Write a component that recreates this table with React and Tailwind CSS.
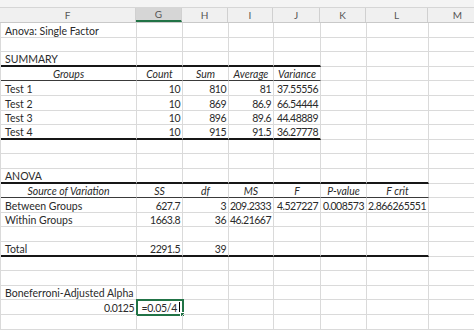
const COLS = [
  { key: 'F', w: 'w-[136px]' },
  { key: 'G', w: 'w-[46px]' },
  { key: 'H', w: 'w-[46px]' },
  { key: 'I', w: 'w-[45px]' },
  { key: 'J', w: 'w-[47px]' },
  { key: 'K', w: 'w-[46px]' },
  { key: 'L', w: 'w-[62px]' },
  { key: 'M', w: 'w-[60px]' },
];

// rows alternate 15/14px so the lines land where Excel's 14.6px rows do
const ROWS = [
  { h: 'h-[15px]', cells: ['Anova: Single Factor'] },
  { h: 'h-[14px]', cells: [] },
  { h: 'h-[15px]', cells: ['SUMMARY'], line: 'thick', span: 5 },
  { h: 'h-[14px]', cells: ['Groups', 'Count', 'Sum', 'Average', 'Variance'], head: true, line: 'thin', span: 5 },
  { h: 'h-[15px]', cells: ['Test 1', '10', '810', '81', '37.55556'] },
  { h: 'h-[15px]', cells: ['Test 2', '10', '869', '86.9', '66.54444'] },
  { h: 'h-[14px]', cells: ['Test 3', '10', '896', '89.6', '44.48889'] },
  { h: 'h-[15px]', cells: ['Test 4', '10', '915', '91.5', '36.27778'], line: 'thick', span: 5 },
  { h: 'h-[14px]', cells: [] },
  { h: 'h-[15px]', cells: [] },
  { h: 'h-[15px]', cells: ['ANOVA'], line: 'thick', span: 7 },
  { h: 'h-[14px]', cells: ['Source of Variation', 'SS', 'df', 'MS', 'F', 'P-value', 'F crit'], head: true, line: 'thin', span: 7 },
  { h: 'h-[15px]', cells: ['Between Groups', '627.7', '3', '209.2333', '4.527227', '0.008573', '2.866265551'] },
  { h: 'h-[14px]', cells: ['Within Groups', '1663.8', '36', '46.21667'] },
  { h: 'h-[15px]', cells: [] },
  { h: 'h-[15px]', cells: ['Total', '2291.5', '39'], line: 'thick', span: 7 },
  { h: 'h-[14px]', cells: [] },
  { h: 'h-[15px]', cells: [] },
  { h: 'h-[14px]', cells: ['Boneferroni-Adjusted Alpha'] },
  { h: 'h-[15px]', cells: ['0.0125'], alpha: true },
  { h: 'h-[15px]', cells: [] },
];

function Cell({ col, i, row }) {
  const text = row.cells[i];
  const inTable = row.span && i < row.span;
  let bottom = 'border-b border-b-[#dadada]';
  if (inTable && row.line === 'thick') bottom = 'border-b-2 border-b-[#161616]';
  if (inTable && row.line === 'thin') bottom = 'border-b border-b-[#3a3a3a]';

  const numeric = !row.head && (i > 0 || row.alpha);
  let align = numeric ? 'justify-end pr-[2px] tracking-[-0.5px]' : 'justify-start pl-[4px]';
  if (row.head) align = 'justify-center';

  const selected = row.alpha && i === 1;

  return (
    <div
      className={`${col.w} relative flex h-full shrink-0 items-end whitespace-nowrap border-r border-r-[#dadada] pb-[1px] ${bottom} ${align}`}
    >
      {text && <span className={row.head ? 'italic' : ''}>{text}</span>}
      {selected && (
        <>
          <span className="flex items-end pl-[2px] tracking-[-0.3px]">
            =0.05/4<span className="mb-[1px] ml-[2px] inline-block h-[10px] w-px bg-black" />
          </span>
          <div className="absolute -left-[1px] -top-[1px] h-[17px] w-[48px] border-2 border-[#217346]" />
          <div className="absolute -bottom-[3px] -right-[3px] h-[5px] w-[5px] border border-white bg-[#217346]" />
        </>
      )}
    </div>
  );
}

export default function App() {
  return (
    <div className="h-[331px] w-[474px] overflow-hidden bg-white font-['Lato',sans-serif] text-[10.5px] leading-none text-[#2a2a2a]">
      <div className="h-[8px] border-b border-[#d6d6d6] bg-[#f4f4f4]" />
      <div className="flex h-[15px] border-b border-[#c9c9c9] bg-[#f0f0f0] text-[10px] text-[#555]">
        {COLS.map((c) => (
          <div
            key={c.key}
            className={`${c.w} flex shrink-0 items-center justify-center border-r border-[#d0d0d0] ${
              c.key === 'G' ? 'border-b-2 border-b-[#217346] bg-[#d6d6d6]' : ''
            }`}
          >
            {c.key}
          </div>
        ))}
      </div>
      <div className="border-l border-[#dadada]">
        {ROWS.map((row, r) => (
          <div key={r} className={`flex ${row.h}`}>
            {COLS.map((c, i) => (
              <Cell key={c.key} col={c} i={i} row={row} />
            ))}
          </div>
        ))}
      </div>
    </div>
  );
}
